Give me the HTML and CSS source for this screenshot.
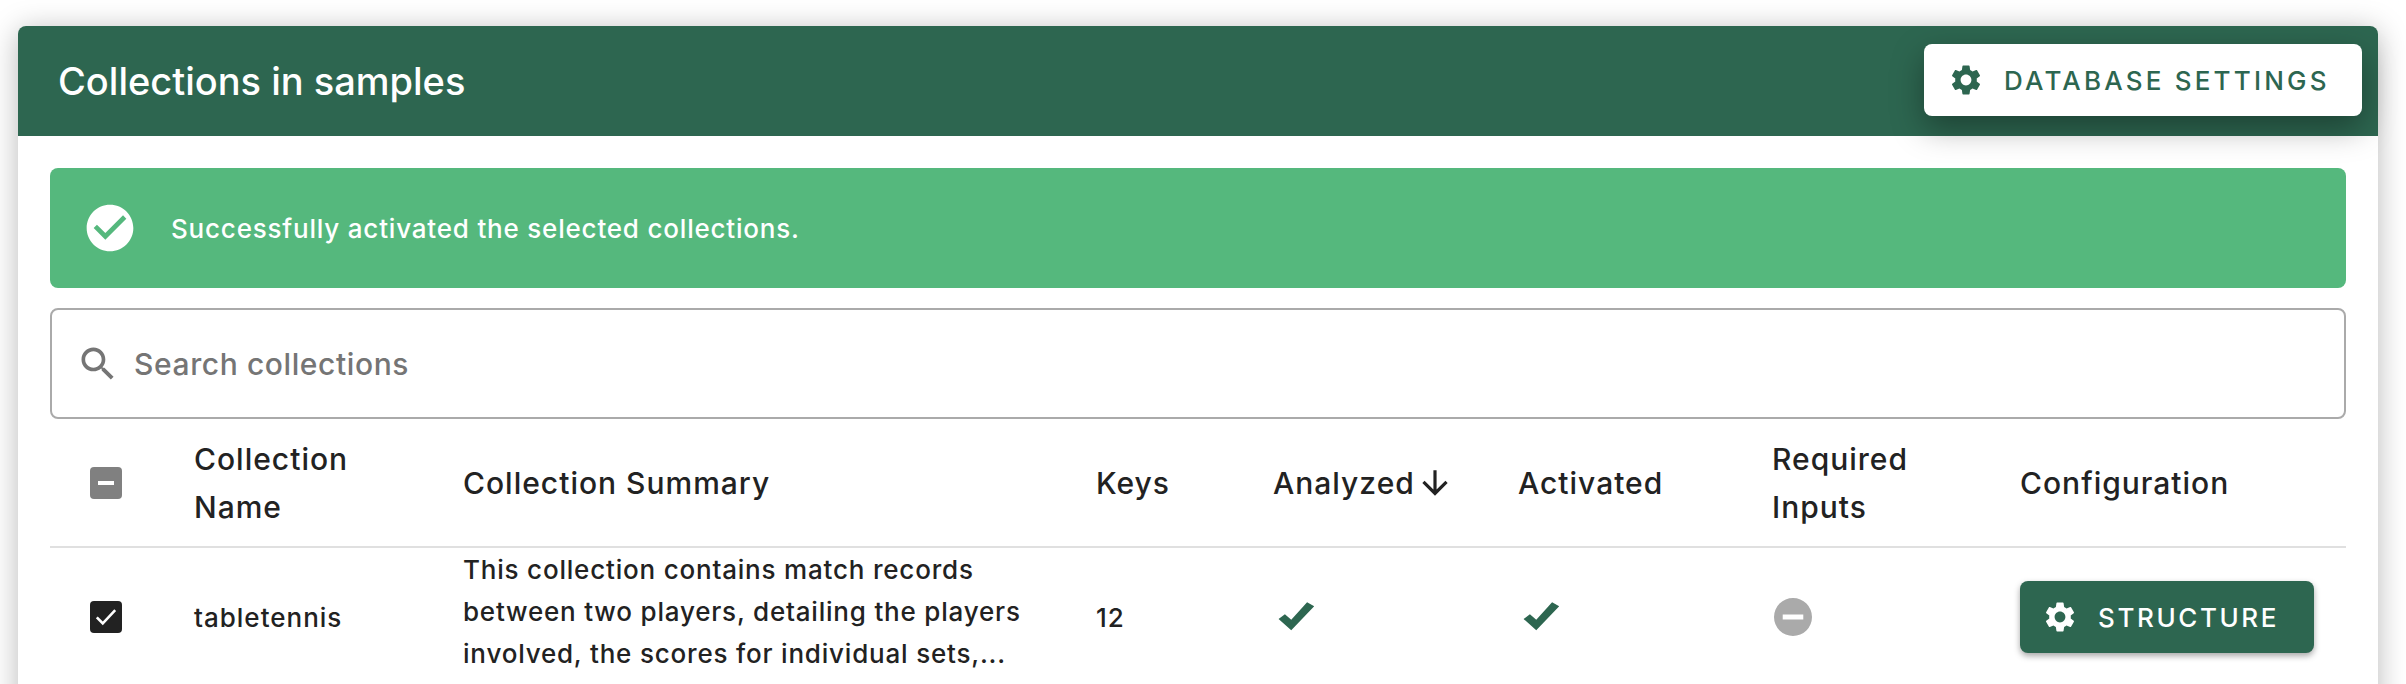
FILE: index.html
```html
<!DOCTYPE html>
<html lang="en">
<head>
  <meta charset="UTF-8" />
  <title>Collections in samples</title>
  <link rel="stylesheet" href="styles.css">
</head>
<body>

  <div class="card">
    <div class="card-header">
      <div class="card-title">Collections in samples</div>
      <button class="settings-button">
        <svg class="gear" viewBox="0 0 24 24"><path d="M19.14 12.94c.04-.3.06-.61.06-.94 0-.32-.02-.64-.07-.94l2.03-1.58a.49.49 0 0 0 .12-.61l-1.92-3.32a.488.488 0 0 0-.59-.22l-2.39.96c-.5-.38-1.03-.7-1.62-.94l-.36-2.54a.484.484 0 0 0-.48-.41h-3.84c-.24 0-.43.17-.47.41l-.36 2.54c-.59.24-1.13.57-1.62.94l-2.39-.96c-.22-.08-.47 0-.59.22L2.74 8.87c-.12.21-.08.47.12.61l2.03 1.58c-.05.3-.09.63-.09.94s.02.64.07.94l-2.03 1.58a.49.49 0 0 0-.12.61l1.92 3.32c.12.22.37.29.59.22l2.39-.96c.5.38 1.03.7 1.62.94l.36 2.54c.05.24.24.41.48.41h3.84c.24 0 .44-.17.47-.41l.36-2.54c.59-.24 1.13-.56 1.62-.94l2.39.96c.22.08.47 0 .59-.22l1.92-3.32c.12-.22.07-.47-.12-.61l-2.01-1.58zM12 15.6c-1.98 0-3.6-1.62-3.6-3.6s1.62-3.6 3.6-3.6 3.6 1.62 3.6 3.6-1.62 3.6-3.6 3.6z"/></svg>
        Database Settings
      </button>
    </div>

    <div class="card-body">
      <div class="alert">
        <svg class="alert-icon" viewBox="0 0 24 24"><path d="M12 2C6.48 2 2 6.48 2 12s4.48 10 10 10 10-4.48 10-10S17.52 2 12 2zm-2 15-5-5 1.41-1.41L10 14.17l7.59-7.59L19 8l-9 9z"/></svg>
        <span>Successfully activated the selected collections.</span>
      </div>

      <div class="search-bar">
        <svg class="search-icon" viewBox="0 0 24 24"><path d="M15.5 14h-.79l-.28-.27C15.41 12.59 16 11.11 16 9.5 16 5.91 13.09 3 9.5 3S3 5.91 3 9.5 5.91 16 9.5 16c1.61 0 3.09-.59 4.23-1.57l.27.28v.79l5 4.99L20.49 19l-4.99-5zm-6 0C7.01 14 5 11.99 5 9.5S7.01 5 9.5 5 14 7.01 14 9.5 11.99 14 9.5 14z"/></svg>
        <input type="text" placeholder="Search collections">
      </div>

      <table class="collections">
        <colgroup>
          <col class="col-check">
          <col class="col-name">
          <col class="col-summary">
          <col class="col-keys">
          <col class="col-analyzed">
          <col class="col-activated">
          <col class="col-required">
          <col class="col-config">
        </colgroup>
        <thead>
          <tr>
            <th><span class="box box-mixed"><svg viewBox="0 0 24 24"><path d="M6 10.5h12v3H6z"/></svg></span></th>
            <th>Collection Name</th>
            <th>Collection Summary</th>
            <th>Keys</th>
            <th>
              <span class="sort-label">Analyzed
                <svg class="sort-arrow" viewBox="0 0 24 24"><path d="M20 12l-1.41-1.41L13 16.17V4h-2v12.17l-5.58-5.59L4 12l8 8 8-8z"/></svg>
              </span>
            </th>
            <th>Activated</th>
            <th>Required Inputs</th>
            <th>Configuration</th>
          </tr>
        </thead>
        <tbody>
          <tr>
            <td><span class="box box-checked"><svg viewBox="0 0 24 24"><path d="M9.6 18.2 4.4 13l1.4-1.4 3.8 3.8 8.6-9.2 1.4 1.3z"/></svg></span></td>
            <td>tabletennis</td>
            <td class="summary">This collection contains match records between two players, detailing the players involved, the scores for individual sets,...</td>
            <td class="keys">12</td>
            <td><svg class="check" viewBox="0 0 24 24" preserveAspectRatio="none"><path d="M9 22 1 13.5 5 10l4 4L19 1l4.5 3z"/></svg></td>
            <td><svg class="check" viewBox="0 0 24 24" preserveAspectRatio="none"><path d="M9 22 1 13.5 5 10l4 4L19 1l4.5 3z"/></svg></td>
            <td><svg class="minus" viewBox="0 0 24 24"><path d="M12 0a12 12 0 1 0 0 24 12 12 0 0 0 0-24zm6.5 13.6h-13v-3.2h13z"/></svg></td>
            <td>
              <button class="structure-button">
                <svg class="gear" viewBox="0 0 24 24"><path d="M19.14 12.94c.04-.3.06-.61.06-.94 0-.32-.02-.64-.07-.94l2.03-1.58a.49.49 0 0 0 .12-.61l-1.92-3.32a.488.488 0 0 0-.59-.22l-2.39.96c-.5-.38-1.03-.7-1.62-.94l-.36-2.54a.484.484 0 0 0-.48-.41h-3.84c-.24 0-.43.17-.47.41l-.36 2.54c-.59.24-1.13.57-1.62.94l-2.39-.96c-.22-.08-.47 0-.59.22L2.74 8.87c-.12.21-.08.47.12.61l2.03 1.58c-.05.3-.09.63-.09.94s.02.64.07.94l-2.03 1.58a.49.49 0 0 0-.12.61l1.92 3.32c.12.22.37.29.59.22l2.39-.96c.5.38 1.03.7 1.62.94l.36 2.54c.05.24.24.41.48.41h3.84c.24 0 .44-.17.47-.41l.36-2.54c.59-.24 1.13-.56 1.62-.94l2.39.96c.22.08.47 0 .59-.22l1.92-3.32c.12-.22.07-.47-.12-.61l-2.01-1.58zM12 15.6c-1.98 0-3.6-1.62-3.6-3.6s1.62-3.6 3.6-3.6 3.6 1.62 3.6 3.6-1.62 3.6-3.6 3.6z"/></svg>
                Structure
              </button>
            </td>
          </tr>
        </tbody>
      </table>
    </div>
  </div>

</body>
</html>
```

FILE: styles.css
```css
html, body {
  margin: 0;
  padding: 0;
  height: 684px;
  overflow: hidden;
  background-color: white;
  font-family: Inter, "Liberation Sans", sans-serif;
  color: #222;
}

body {
  padding: 26px 28px 0 18px;
  box-sizing: border-box;
}

.card {
  border-radius: 8px 8px 0 0;
  background-color: white;
  box-shadow: 0 4px 30px rgba(0, 0, 0, 0.28);
  min-height: 800px;
}

.card-header {
  height: 110px;
  box-sizing: border-box;
  padding: 0 16px 0 40px;
  display: flex;
  justify-content: space-between;
  align-items: center;
  background-color: #2d6650;
  border-radius: 8px 8px 0 0;
}

.card-title {
  color: white;
  font-size: 38px;
  font-weight: 500;
}

.settings-button {
  width: 438px;
  height: 72px;
  margin-top: -2px;
  padding: 0 0 0 24px;
  display: flex;
  align-items: center;
  gap: 20px;
  border: none;
  border-radius: 8px;
  background-color: white;
  color: #2d6650;
  font-family: inherit;
  font-size: 26px;
  font-weight: 500;
  letter-spacing: 3.2px;
  text-transform: uppercase;
  box-shadow: 0 12px 32px rgba(0, 0, 0, 0.35);
}

.gear {
  width: 36px;
  height: 36px;
  fill: currentColor;
}

.card-body {
  padding: 32px 32px 0;
}

.alert {
  height: 120px;
  padding-left: 32px;
  display: flex;
  align-items: center;
  gap: 33px;
  border-radius: 8px;
  background-color: #55b87d;
  color: white;
  font-size: 26px;
  font-weight: 500;
  letter-spacing: 0.8px;
}

.alert-icon {
  width: 56px;
  height: 56px;
  fill: white;
}

.search-bar {
  height: 111px;
  margin-top: 20px;
  padding-left: 24px;
  box-sizing: border-box;
  display: flex;
  align-items: center;
  gap: 14px;
  border: 2px solid #aaa;
  border-radius: 8px;
}

.search-icon {
  width: 44px;
  height: 44px;
  fill: #757575;
}

.search-bar input {
  flex: 1;
  border: none;
  outline: none;
  padding: 0;
  font-family: inherit;
  font-size: 30px;
  font-weight: 500;
  letter-spacing: 0.6px;
}

.search-bar input::placeholder {
  color: #757575;
}

.collections {
  width: 100%;
  table-layout: fixed;
  border-collapse: collapse;
}

.col-check { width: 144px; }
.col-name { width: 269px; }
.col-summary { width: 633px; }
.col-keys { width: 177px; }
.col-analyzed { width: 245px; }
.col-activated { width: 254px; }
.col-required { width: 248px; }
.col-config { width: 326px; }

.collections th {
  height: 127px;
  padding: 0 32px 0 0;
  text-align: left;
  font-size: 30px;
  font-weight: 500;
  line-height: 48px;
  letter-spacing: 1px;
  border-bottom: 2px solid #e0e0e0;
}

.collections td {
  height: 138px;
  padding: 0 32px 0 0;
  font-size: 26px;
  font-weight: 500;
  letter-spacing: 1px;
}

.collections th:first-child,
.collections td:first-child {
  padding-left: 40px;
}

.collections .summary {
  height: 128px;
  padding-bottom: 10px;
  line-height: 42px;
  letter-spacing: 0.8px;
}

.box {
  display: block;
  width: 32px;
  height: 32px;
  border-radius: 4px;
}

.box svg {
  display: block;
  fill: white;
}

.box-mixed {
  background-color: #808080;
}

.box-checked {
  background-color: #222;
}

.sort-label {
  display: inline-flex;
  align-items: center;
  gap: 1px;
}

.sort-arrow {
  width: 38px;
  height: 38px;
  fill: #222;
}

.check {
  display: block;
  width: 38px;
  height: 32px;
  margin-left: 4px;
  fill: #2d6650;
}

.minus {
  display: block;
  width: 38px;
  height: 38px;
  margin-left: 2px;
  fill: #aaa;
}

.structure-button {
  width: 294px;
  height: 72px;
  padding: 0 0 0 22px;
  display: flex;
  align-items: center;
  gap: 20px;
  border: none;
  border-radius: 8px;
  background-color: #2d6650;
  color: white;
  font-family: inherit;
  font-size: 26px;
  font-weight: 500;
  letter-spacing: 2.6px;
  text-transform: uppercase;
  box-shadow: 0 3px 6px rgba(0, 0, 0, 0.35);
}
```
